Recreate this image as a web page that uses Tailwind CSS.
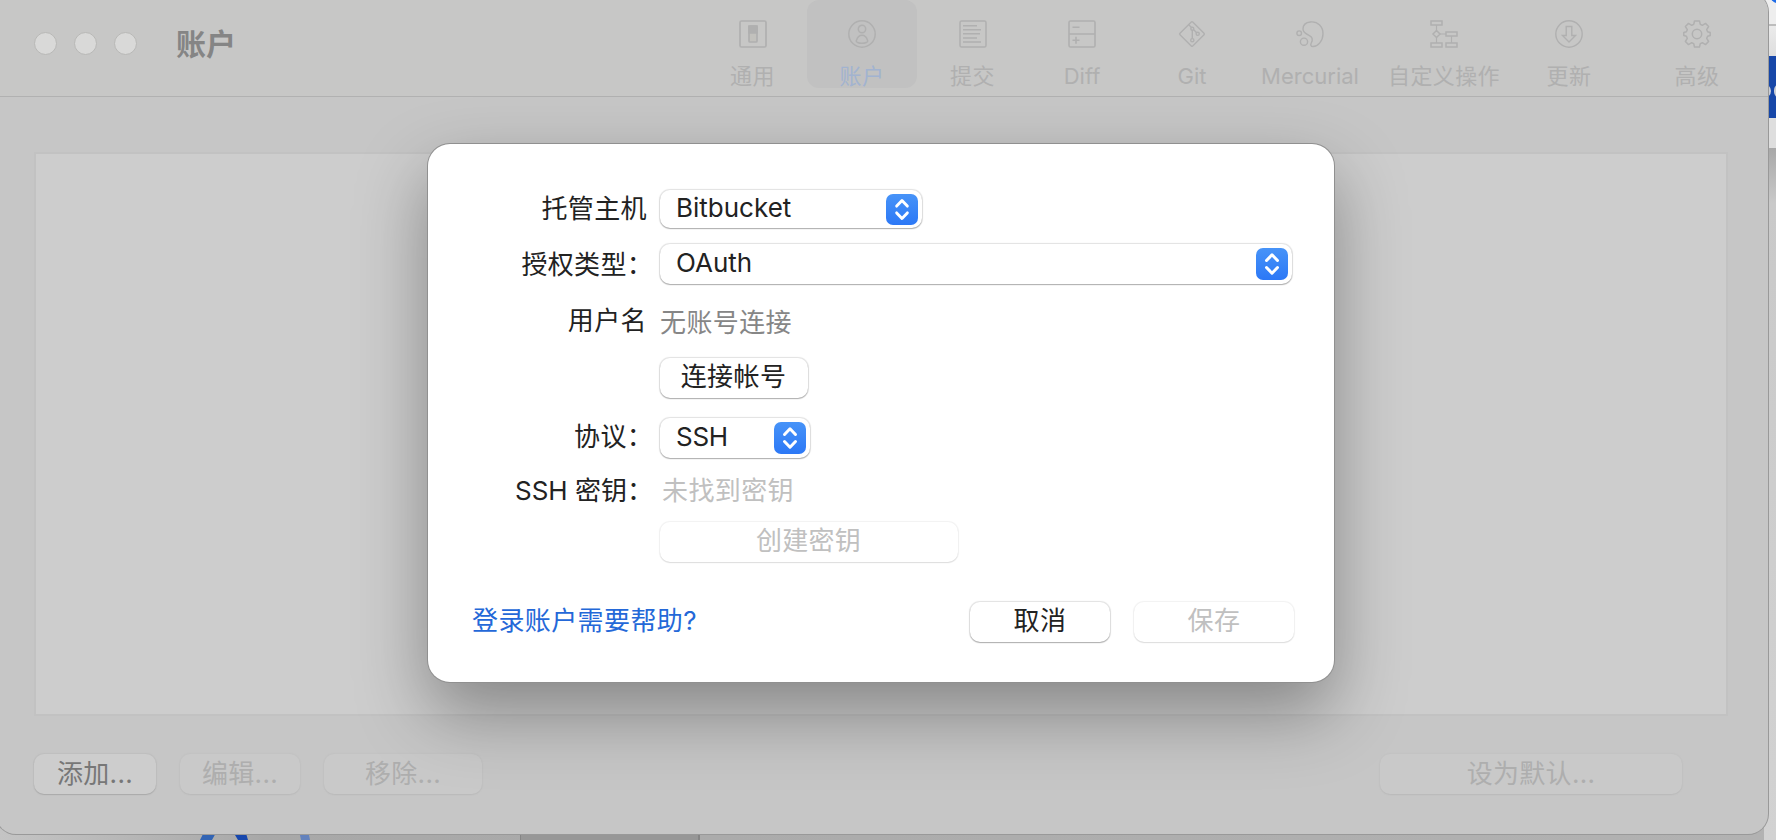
<!DOCTYPE html>
<html lang="zh-CN">
<head>
<meta charset="utf-8">
<title>账户</title>
<script src="https://cdn.jsdelivr.net/npm/@tailwindcss/browser@4"></script>
</head>
<body class="relative h-[840px] w-[1776px] overflow-hidden bg-[#b0b0b0] font-['Inter','Noto_Sans_CJK_SC',sans-serif] text-[26px] leading-10 whitespace-nowrap">

<!-- Desktop content visible behind the window -->
<div class="absolute top-0 right-0 flex h-full w-3 flex-col overflow-hidden">
  <div class="relative h-6 shrink-0 bg-[#eeeeee]"><div class="absolute -top-[22px] left-1 size-[26px] rounded-full bg-[#1d6be8]"></div></div>
  <div class="h-0.5 shrink-0 bg-[#bdbdbd]"></div>
  <div class="h-[30px] shrink-0 bg-linear-to-b from-[#ebebeb] to-[#dedede]"></div>
  <div class="relative h-[62px] shrink-0 bg-[#1747a8]">
    <div class="absolute top-7 -left-2 h-3.5 w-[15px] rounded-full border-3 border-[#c9cdd6]"></div>
    <div class="absolute top-7 left-2.5 h-3.5 w-3 rounded-full border-3 border-[#c9cdd6]"></div>
  </div>
  <div class="h-[30px] shrink-0 bg-[#dedede]"></div>
  <div class="grow bg-linear-to-b from-[#a8a8a8] via-[#c9c9c9] via-8% to-[#d2d2d2]"></div>
</div>
<div class="absolute bottom-0 left-0 flex h-4 w-[1764px] bg-linear-to-r from-[#c4c4c4] via-[#a8a8a8] via-15% to-[#b2b2b2]">
  <svg class="ml-[190px] h-4 w-[130px]" viewBox="0 0 130 16"><path d="M10 16 15 6H29Q24 11 22 16Z" fill="#3264b4"/><path d="M42 6h13l3 10H48Z" fill="#1747ad"/><path d="M109 6h9l2 10h-9Z" fill="#6382bd"/></svg>
  <div class="ml-[200px] h-4 w-[180px] border-r-2 border-l border-[#858585] bg-[#979797]"></div>
</div>

<!-- Preferences window -->
<main class="absolute -top-2 -left-1 flex h-[842px] w-[1772px] flex-col overflow-hidden rounded-[20px] bg-[#c6c6c6] pt-2 pl-1 shadow-[0_0_0_1px_#999]">
  <header class="flex h-[97px] shrink-0 border-b border-[#b1b1b1] bg-[#c7c7c6] text-[22px] leading-7 text-[#b0b0b0]">
    <div class="flex w-[697px] items-center gap-[17px] pb-[9px] pl-[34px]">
      <i class="size-[23px] rounded-full border border-[#b8b8b6] bg-[#d9d9d8]"></i>
      <i class="size-[23px] rounded-full border border-[#b8b8b6] bg-[#d9d9d8]"></i>
      <i class="size-[23px] rounded-full border border-[#b8b8b6] bg-[#d9d9d8]"></i>
      <h1 class="ml-[22px] pt-px text-[30px] font-bold text-[#858585]">账户</h1>
    </div>
    <nav class="flex h-22 text-center">
      <a class="flex w-[110px] flex-col items-center gap-[14px] pt-5 pl-px tracking-[0.4px]"><svg class="size-7 shrink-0" viewBox="0 0 28 28" fill="none" stroke="currentColor" stroke-width="1.7"><rect x="1" y="1" width="26" height="26" rx="1.5"/><rect x="10" y="6" width="8" height="16" rx="1" fill="#c2c1bd"/><path d="M10 6h8v7h-8z" fill="currentColor"/></svg>通用</a>
      <a class="flex w-[110px] flex-col items-center gap-[14px] rounded-xl bg-[#c1c1c1] pt-5 tracking-[0.4px] text-[#a2b3d0]"><svg class="size-7 shrink-0 text-[#b0b0b0]" viewBox="0 0 28 28" fill="none" stroke="currentColor" stroke-width="1.5"><circle cx="14" cy="14" r="13.2"/><circle cx="14" cy="9" r="3.7"/><path d="M14 15.3c3 0 4.7 2.2 5.7 5.4.4 1.4-2.2 2.6-5.7 2.6s-6.100-1.200-5.700-2.600c1-3.200 2.700-5.400 5.700-5.400Z"/></svg>账户</a>
      <a class="flex w-[110px] flex-col items-center gap-[14px] pt-5 pl-px tracking-[0.4px]"><svg class="size-7 shrink-0" viewBox="0 0 28 28" fill="none" stroke="currentColor" stroke-width="1.5"><rect x="1" y="1" width="26" height="26" rx="1.500"/><path d="M4 5.700h14M4 9.700h18M4 13.800h17M4 18h14M4 22h18"/></svg>提交</a>
      <a class="flex w-[110px] flex-col items-center gap-[14px] pt-5"><svg class="size-7 shrink-0" viewBox="0 0 28 28" fill="none" stroke="currentColor" stroke-width="1.600"><rect x="1" y="1" width="26" height="26" rx="1.500"/><path d="M1 14h26M4.500 7.200h7M4.500 20.300h7M8 16.800v7"/></svg>Diff</a>
      <a class="flex w-[110px] flex-col items-center gap-[14px] pt-5"><svg class="size-7 shrink-0" viewBox="0 0 28 28" fill="none" stroke="currentColor" stroke-width="1.400"><rect x="5" y="5" width="18" height="18" rx="1" transform="rotate(45 14 14)"/><path d="m10.500 4.500 3 3M14.300 10v8.500M15.500 9.500l3.200 3.200"/><circle cx="14.300" cy="8.700" r="1.500"/><circle cx="19.700" cy="13.800" r="1.600"/><circle cx="14.300" cy="20.200" r="1.600"/></svg>Git</a>
      <a class="flex w-[126px] flex-col items-center gap-[14px] pt-5"><svg class="size-7 shrink-0" viewBox="0 0 28 28" fill="none" stroke="currentColor" stroke-width="1.400"><path d="M14.500 2C22 1.200 27.200 7 27 14c-.2 7-5 12.500-10 12.500-2.300 0-2.700-1.700-1.700-3.500 1.800-3.300 1.200-6-2.300-7.700-3-1.400-6-3-6-6.300 0-3.900 3-6.600 7.500-7Z"/><circle cx="3.200" cy="13.200" r="2.300"/><circle cx="8" cy="21.700" r="3.600"/></svg>Mercurial</a>
      <a class="flex w-[142px] flex-col items-center gap-[14px] pt-5 tracking-[0.4px]"><svg class="size-7 shrink-0" viewBox="0 0 28 28" fill="none" stroke="currentColor" stroke-width="1.500"><path d="M1 1h11v4H1zM16 12h11v4H16zM1 23h11v4H1zM16 23h11v4H16zM6.500 10.500 10 14l-3.500 3.500L3 14z"/><path d="M6.500 5v5.500M6.500 17.500V23M10 14h6M21.500 16v7" stroke-width="1.100"/></svg>自定义操作</a>
      <a class="-ml-px flex w-[110px] flex-col items-center gap-[14px] pt-5 tracking-[0.4px]"><svg class="size-7 shrink-0" viewBox="0 0 28 28" fill="none" stroke="currentColor" stroke-width="1.400"><circle cx="14" cy="14" r="13.200"/><path d="M11.200 6.500h5.600v9h3.700L14 22l-6.500-6.500h3.700z"/></svg>更新</a>
      <a class="ml-[18px] flex w-[110px] flex-col items-center gap-[14px] pt-5 tracking-[0.4px]"><svg class="size-7 shrink-0" viewBox="0 0 28 28" fill="none" stroke="currentColor" stroke-width="1.500" stroke-linejoin="round"><path d="M11.500 1h5l.8 3.400 2 .9 3.200-1.900 3.100 3.100-1.900 3.200.9 2 2.600.8v3l-2.600.8-.9 2 1.900 3.200-3.100 3.100-3.200-1.900-2 .9-.8 3.400h-5l-.8-3.400-2-.9-3.200 1.900-3.100-3.100 1.900-3.200-.9-2-2.600-.8v-3l2.600-.8.9-2-1.900-3.200 3.100-3.100 3.200 1.900 2-.9z"/><circle cx="14" cy="14" r="4.700"/></svg>高级</a>
    </nav>
  </header>

  <section class="mt-[55px] ml-[34px] h-[564px] w-[1694px] shrink-0 border-2 border-[#c2c2c2] bg-[#cdcdcd]"></section>

  <footer class="mt-[38px] flex h-10 shrink-0 pl-[34px] text-center leading-[38px] tracking-[0.3px] text-[#aeaeae]">
    <button class="h-10 w-[122px] rounded-[10px] bg-[#cdcdcd] text-[#777] shadow-[0_1px_1px_#aaa,0_0_1px_1px_#bebebe]">添加...</button>
    <button class="ml-6 h-10 w-[120px] rounded-[10px] bg-[#c9c9c9] shadow-[0_1px_1px_#bbb,0_0_1px_1px_#c2c2c2]">编辑...</button>
    <button class="ml-6 h-10 w-[158px] rounded-[10px] bg-[#c9c9c9] shadow-[0_1px_1px_#bbb,0_0_1px_1px_#c2c2c2]">移除...</button>
    <button class="ml-[898px] h-10 w-[302px] rounded-[10px] bg-[#c9c9c9] shadow-[0_1px_1px_#bbb,0_0_1px_1px_#c2c2c2]">设为默认...</button>
  </footer>
</main>

<!-- Add-account sheet -->
<div role="dialog" class="absolute top-36 left-[428px] flex h-[538px] w-[906px] flex-col rounded-[22px] bg-white pt-[46px] text-[#222] shadow-[0_0_0_1px_#909090,0_30px_70px_rgba(0,0,0,0.35)]">
  <div class="flex h-[38px] leading-[36px]">
    <label class="w-56 pt-px pr-[5px] text-right tracking-[0.4px]">托管主机</label>
    <div class="ml-2 flex w-[262px] items-center justify-between rounded-[10px] pr-1 pl-4 shadow-[0_1px_1px_#b0b0b0,0_0_1px_1px_#e2e2e2]"><span class="pb-0.5">Bitbucket</span><svg class="h-[31px] w-8 rounded-[7px] bg-linear-to-b from-[#4793f8] to-[#2c78f6]" viewBox="0 0 32 32" fill="none" stroke="white" stroke-width="3" stroke-linecap="round" stroke-linejoin="round"><path d="m10.500 12.500 5.500-5.700 5.500 5.700M10.500 19.500l5.500 5.700 5.500-5.700"/></svg></div>
  </div>
  <div class="mt-4 flex h-10">
    <label class="w-[225px] pt-px text-right tracking-[0.3px]">授权类型：</label>
    <div class="ml-[7px] flex w-[632px] items-center justify-between rounded-[10px] pr-1 pl-4 leading-[38px] shadow-[0_1px_1px_#b0b0b0,0_0_1px_1px_#e2e2e2]"><span class="pb-0.5">OAuth</span><svg class="size-8 rounded-[7px] bg-linear-to-b from-[#4793f8] to-[#2c78f6]" viewBox="0 0 32 32" fill="none" stroke="white" stroke-width="3" stroke-linecap="round" stroke-linejoin="round"><path d="m10.500 12.500 5.500-5.700 5.500 5.700M10.500 19.500l5.500 5.700 5.500-5.700"/></svg></div>
  </div>
  <div class="mt-[17px] flex h-10">
    <label class="w-56 pr-[5px] text-right tracking-[0.4px]">用户名</label>
    <span class="ml-2 pt-[2px] tracking-[0.4px] text-[#868686]">无账号连接</span>
  </div>
  <div class="mt-[17px] flex h-10 pl-58">
    <button class="w-[148px] rounded-[10px] pr-px pb-0.5 leading-[38px] tracking-[0.4px] shadow-[0_1px_1px_#b0b0b0,0_0_1px_1px_#e2e2e2]">连接帐号</button>
  </div>
  <div class="mt-5 flex h-10">
    <label class="w-[225px] text-right leading-[38px] tracking-[0.3px]">协议：</label>
    <div class="ml-[7px] flex w-[150px] items-center justify-between rounded-[10px] pr-1 pl-4 leading-[38px] shadow-[0_1px_1px_#b0b0b0,0_0_1px_1px_#e2e2e2]"><span class="pb-0.5 tracking-[-0.3px]">SSH</span><svg class="size-8 rounded-[7px] bg-linear-to-b from-[#4793f8] to-[#2c78f6]" viewBox="0 0 32 32" fill="none" stroke="white" stroke-width="3" stroke-linecap="round" stroke-linejoin="round"><path d="m10.500 12.500 5.500-5.700 5.500 5.700M10.500 19.500l5.500 5.700 5.500-5.700"/></svg></div>
  </div>
  <div class="mt-[13px] flex h-10">
    <label class="w-[225px] text-right">SSH 密钥：</label>
    <span class="ml-[9px] tracking-[0.4px] text-[#c0c0c0]">未找到密钥</span>
  </div>
  <div class="mt-[11px] flex h-10 pl-58">
    <button class="w-[298px] rounded-[10px] pr-px pb-[3px] leading-[37px] tracking-[0.3px] text-[#c0c0c0] shadow-[0_1px_1px_#dedede,0_0_1px_1px_#f2f2f2]">创建密钥</button>
  </div>
  <div class="mt-10 flex h-10 pl-11 leading-[38px] tracking-[0.4px]">
    <a class="w-[498px] text-[#2468d8]">登录账户需要帮助?</a>
    <button class="w-[140px] rounded-[10px] pb-0.5 shadow-[0_1px_1px_#b0b0b0,0_0_1px_1px_#e2e2e2]">取消</button>
    <button class="ml-6 w-40 rounded-[10px] pb-0.5 text-[#c0c0c0] shadow-[0_1px_1px_#dedede,0_0_1px_1px_#f2f2f2]">保存</button>
  </div>
</div>
</body>
</html>
